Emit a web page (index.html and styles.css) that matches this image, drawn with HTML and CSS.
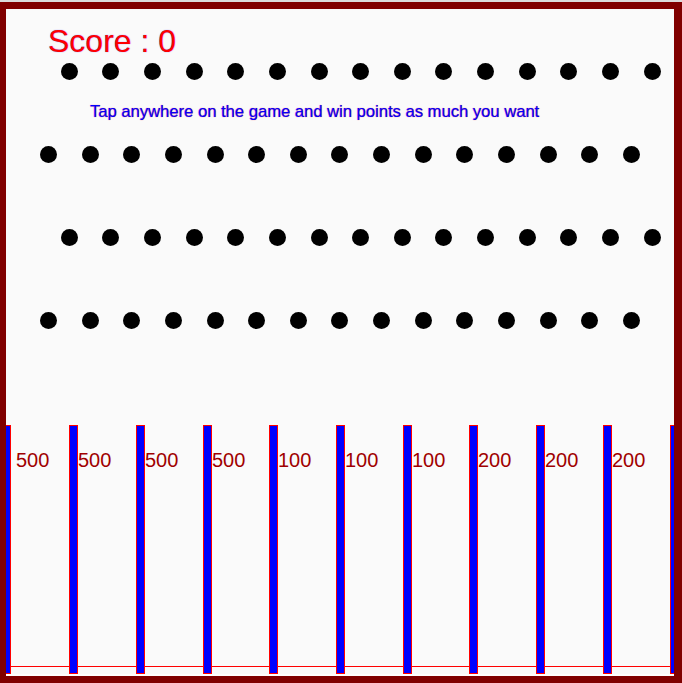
FILE: index.html
```html
<!DOCTYPE html>
<html lang="en">
<head>
    <meta charset="UTF-8">
    <meta name="viewport" content="width=device-width, initial-scale=1.0">
    <title>Plinko</title>
    <link rel="stylesheet" href="styles.css">
</head>
<body>
    <div class="board">
        <div class="field">
            <h1 class="score">Score : 0</h1>

            <div class="peg-row row-a">
                <span></span><span></span><span></span><span></span><span></span>
                <span></span><span></span><span></span><span></span><span></span>
                <span></span><span></span><span></span><span></span><span></span>
            </div>

            <p class="hint">Tap anywhere on the game and win points as much you want</p>

            <div class="peg-row row-b">
                <span></span><span></span><span></span><span></span><span></span>
                <span></span><span></span><span></span><span></span><span></span>
                <span></span><span></span><span></span><span></span><span></span>
            </div>

            <div class="peg-row row-a spaced">
                <span></span><span></span><span></span><span></span><span></span>
                <span></span><span></span><span></span><span></span><span></span>
                <span></span><span></span><span></span><span></span><span></span>
            </div>

            <div class="peg-row row-b spaced">
                <span></span><span></span><span></span><span></span><span></span>
                <span></span><span></span><span></span><span></span><span></span>
                <span></span><span></span><span></span><span></span><span></span>
            </div>
        </div>

        <!-- Point slots -->
        <div class="slots">
            <div class="bar"></div><div class="slot first"><span>500</span></div>
            <div class="bar"></div><div class="slot"><span>500</span></div>
            <div class="bar"></div><div class="slot"><span>500</span></div>
            <div class="bar"></div><div class="slot"><span>500</span></div>
            <div class="bar"></div><div class="slot"><span>100</span></div>
            <div class="bar"></div><div class="slot"><span>100</span></div>
            <div class="bar"></div><div class="slot"><span>100</span></div>
            <div class="bar"></div><div class="slot"><span>200</span></div>
            <div class="bar"></div><div class="slot"><span>200</span></div>
            <div class="bar"></div><div class="slot"><span>200</span></div>
            <div class="bar"></div>
        </div>
    </div>
</body>
</html>
```

FILE: styles.css
```css
* {
    margin: 0;
    padding: 0;
    box-sizing: border-box;
}

body {
    font-family: 'Liberation Sans', Arial, sans-serif;
    background-color: #dcdcdc;
    padding-top: 2px;
    height: 683px;
    overflow: hidden;
}

.board {
    width: 682px;
    height: 681px;
    border-style: solid;
    border-color: #800000;
    border-width: 7px 8px 7px 6px;
    background-color: #ffffff;
    overflow: hidden;
}

.field {
    height: 416px;
    background-color: #fafafa;
}

.score {
    padding: 14px 0 0 42px;
    font-size: 32px;
    font-weight: normal;
    line-height: 36px;
    color: #ff0000;
    text-shadow: 0 0 1px rgba(60, 60, 255, 0.8);
}

.peg-row {
    display: flex;
    gap: 24.64px;
    height: 17px;
    margin-top: 4px;
}

.peg-row span {
    width: 17px;
    height: 17px;
    border-radius: 50%;
    background-color: #000;
    flex-shrink: 0;
}

.row-a {
    padding-left: 54.8px;
}

.row-b {
    padding-left: 34px;
    margin-top: 24px;
}

.peg-row.spaced {
    margin-top: 66px;
}

.hint {
    margin-top: 22px;
    padding-left: 84px;
    font-size: 16.6px;
    line-height: 20px;
    color: #0000ff;
    -webkit-text-stroke: 0.2px #1a00e0;
    text-shadow: 0 0 1px rgba(255, 0, 0, 0.7);
}

/* bars sit every ~66.8px, rounded to whole pixels */
.slots {
    display: grid;
    grid-template-columns:
        9px 58px 9px 58px 9px 58px 9px 57px 9px 58px 9px
        58px 9px 57px 9px 58px 9px 58px 9px 58px 9px;
    height: 249px;
    margin-left: -4px;
    width: 677px;
    background-color: #fafafa;
}

.bar {
    height: 249px;
    background-color: #0000ff;
    border: 1px solid #ff0000;
}

.slot {
    height: 242px;
    border-bottom: 1px solid #ff0000;
    padding-top: 24px;
}

.slot span {
    display: block;
    font-size: 20px;
    line-height: 23px;
    color: #a00000;
}

.slot.first span {
    padding-left: 5px;
}
```
